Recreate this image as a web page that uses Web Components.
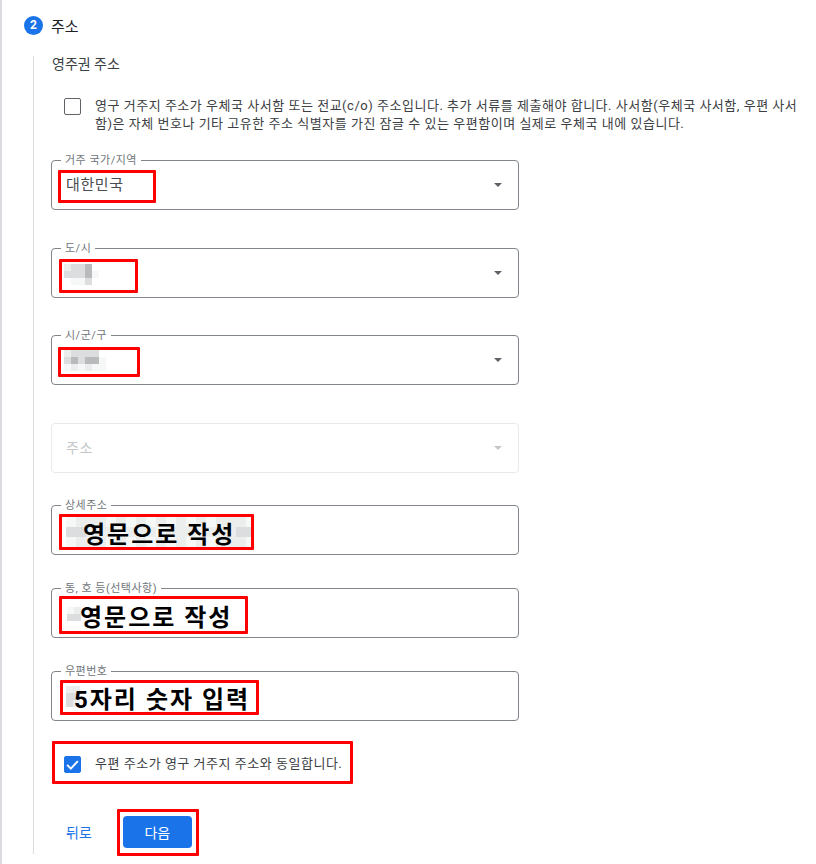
<!DOCTYPE html>
<html lang="ko">
<head>
<meta charset="utf-8">
<title>주소</title>
<style>
    html, body { margin: 0; background: #fff; overflow: hidden; }
    body { font: 14px Roboto, "Noto Sans CJK KR", sans-serif; color: #3c4043; }
</style>
</head>
<body>
<step-section number="2" heading="주소">
    <div style="font-size:14px;line-height:16px;color:#3c4043;margin-left:1px">영주권 주소</div>

    <check-row style="margin-top:26px;height:36px">
        영구 거주지 주소가 우체국 사서함 또는 전교(c/o) 주소입니다. 추가 서류를 제출해야 합니다. 사서함(우체국 사서함, 우편 사서<br>
        함)은 자체 번호나 기타 고유한 주소 식별자를 가진 잠글 수 있는 우편함이며 실제로 우체국 내에 있습니다.
    </check-row>

    <form-field label="거주 국가/지역" value="대한민국" select style="margin-top:26px">
        <red-box slot="mark" box="6,9,98,33"></red-box>
    </form-field>

    <form-field label="도/시" select style="margin-top:38px">
        <red-box slot="mark" box="7,10,79,34">
            <pixel-mosaic at="2,2" cells="1223,22234,04420"></pixel-mosaic>
        </red-box>
    </form-field>

    <form-field label="시/군/구" select style="margin-top:37px">
        <red-box slot="mark" box="6,11,82,30">
            <pixel-mosaic at="3,0" cells="122220,232334,414144"></pixel-mosaic>
        </red-box>
    </form-field>

    <form-field label="주소" placeholder select disabled style="margin-top:38px"></form-field>

    <form-field label="상세주소" style="margin-top:32px">
        <red-box slot="mark" box="7,8,195,36">
            <pixel-mosaic at="4,0" size="10" cells="4111414141414141114,2211141114111411122,4111414141414141114"></pixel-mosaic>
            <big-note left="21">영문으로 작성</big-note>
        </red-box>
    </form-field>

    <form-field label="동, 호 등(선택사항)" style="margin-top:33px">
        <red-box slot="mark" box="7,7,189,38">
            <pixel-mosaic at="5,8" cells="41,22"></pixel-mosaic>
            <big-note left="18">영문으로 작성</big-note>
        </red-box>
    </form-field>

    <form-field label="우편번호" style="margin-top:33px">
        <red-box slot="mark" box="8,8,199,35">
            <pixel-mosaic at="3,3" cells="11,22,21"></pixel-mosaic>
            <big-note left="11">5자리 숫자 입력</big-note>
        </red-box>
    </form-field>

    <check-row checked style="margin-top:35px;height:17px">
        우편 주소가 영구 거주지 주소와 동일합니다.
        <red-box slot="mark" box="1,-15,301,43"></red-box>
    </check-row>

    <form-actions back="뒤로" next="다음" style="margin-top:43px">
        <red-box slot="mark" box="-6,-7,82,47"></red-box>
    </form-actions>
</step-section>

<template id="step-section-tpl">
    <style>
        :host { display: block; height: 864px; box-sizing: border-box; border-left: 2px solid #dadce0; padding: 16px 0 0 22px; }
        .head { display: flex; align-items: center; gap: 8px; height: 18px; font-size: 15px; color: #202124; }
        .badge { width: 19px; height: 19px; border-radius: 50%; background: #1a73e8; color: #fff; font: 700 12px/19px Roboto, sans-serif; text-align: center; }
        .body { margin: 22px 0 0 9px; border-left: 1px solid #dadce0; padding-left: 17px; height: 798px; }
    </style>
    <div class="head"><span class="badge"></span><span class="title"></span></div>
    <div class="body"><slot></slot></div>
</template>

<template id="check-row-tpl">
    <style>
        :host { display: block; position: relative; padding-left: 13px; }
        .row { display: flex; gap: 14px; }
        .box { flex: none; width: 17px; height: 17px; box-sizing: border-box; border: 1px solid #5f6368; border-radius: 2px; display: flex; }
        :host([checked]) .box { background: #1a73e8; border-color: #1a73e8; }
        svg { display: none; width: 15px; height: 15px; }
        :host([checked]) svg { display: block; }
        .text { font-size: 13px; line-height: 18px; color: #3c4043; white-space: nowrap; margin-top: -1px; letter-spacing: .52px; }
    </style>
    <div class="row">
        <span class="box">
            <svg viewBox="0 0 14 14"><path d="M2 7.4 5.4 10.8 12 3.8" fill="none" stroke="#fff" stroke-width="1.8"/></svg>
        </span>
        <span class="text"><slot></slot></span>
    </div>
    <slot name="mark"></slot>
</template>

<template id="form-field-tpl">
    <style>
        :host { display: block; position: relative; width: 468px; height: 50px; box-sizing: border-box; border: 1px solid #80868b; border-radius: 4px; }
        :host([disabled]) { border-color: #e8eaed; }
        .label { position: absolute; left: 9px; top: -7px; padding: 0 4px; background: #fff; font-size: 11px; line-height: 13px; color: #70757a; white-space: nowrap; letter-spacing: .5px; }
        .value { position: absolute; left: 14px; top: 0; line-height: 48px; font-size: 15px; color: #4a4e52; letter-spacing: .6px; }
        :host([disabled]) .value { font-size: 14px; color: #c4c7c9; }
        .caret { display: none; position: absolute; right: 16px; top: 22px; width: 0; height: 0; border: 4.5px solid transparent; border-top-color: #5f6368; border-bottom: 0; }
        :host([select]) .caret { display: block; }
        :host([disabled]) .caret { border-top-color: #c4c7c9; }
    </style>
    <span class="label"></span>
    <span class="value"></span>
    <span class="caret"></span>
    <slot name="mark"></slot>
</template>

<template id="form-actions-tpl">
    <style>
        :host { display: flex; align-items: center; position: relative; width: max-content; margin-left: 15px; gap: 31px; }
        .back { font-size: 14px; color: #1a73e8; }
        .wrap { position: relative; display: block; }
        .next { display: block; width: 69px; height: 32px; border: 0; border-radius: 4px; background: #1a73e8; color: #fff; font: 14px Roboto, "Noto Sans CJK KR", sans-serif; padding: 0; }
    </style>
    <span class="back"></span>
    <span class="wrap"><button class="next" type="button"></button><slot name="mark"></slot></span>
</template>

<template id="red-box-tpl">
    <style>
        :host { display: block; position: absolute; box-sizing: border-box; border: 3px solid #f00; border-radius: 1px; overflow: hidden; }
    </style>
    <slot></slot>
</template>

<template id="pixel-mosaic-tpl">
    <style>
        :host { position: absolute; display: grid; }
        i { display: block; }
    </style>
</template>

<template id="big-note-tpl">
    <style>
        :host { position: absolute; top: 0; bottom: 0; display: flex; align-items: center; font: 700 24px Roboto, "Noto Sans CJK KR", sans-serif; letter-spacing: 2px; color: #000; white-space: nowrap; }
    </style>
    <slot></slot>
</template>

<script>
    function shadowFrom(el, id) {
        const root = el.attachShadow({mode: 'open'});
        root.appendChild(document.getElementById(id).content.cloneNode(true));
        return root;
    }

    class StepSection extends HTMLElement {
        constructor() {
            super();
            const root = shadowFrom(this, 'step-section-tpl');
            root.querySelector('.badge').textContent = this.getAttribute('number');
            root.querySelector('.title').textContent = this.getAttribute('heading');
        }
    }

    class CheckRow extends HTMLElement {
        constructor() {
            super();
            shadowFrom(this, 'check-row-tpl');
        }
    }

    class FormField extends HTMLElement {
        constructor() {
            super();
            const root = shadowFrom(this, 'form-field-tpl');
            const label = this.getAttribute('label');
            root.querySelector('.label').textContent = label;
            // the disabled field shows its label as a placeholder inside the box
            if (this.hasAttribute('placeholder')) {
                root.querySelector('.label').remove();
                root.querySelector('.value').textContent = label;
            } else {
                root.querySelector('.value').textContent = this.getAttribute('value') || '';
            }
        }
    }

    class FormActions extends HTMLElement {
        constructor() {
            super();
            const root = shadowFrom(this, 'form-actions-tpl');
            root.querySelector('.back').textContent = this.getAttribute('back');
            root.querySelector('.next').textContent = this.getAttribute('next');
        }
    }

    class RedBox extends HTMLElement {
        constructor() {
            super();
            shadowFrom(this, 'red-box-tpl');
            const [x, y, w, h] = this.getAttribute('box').split(',');
            this.style.cssText += `left:${x}px;top:${y}px;width:${w}px;height:${h}px`;
        }
    }

    // blurred-out text: each digit is one grey square
    const MOSAIC_SHADES = ['transparent', '#eceded', '#dcddde', '#b9babb', '#f6f7f7'];

    class PixelMosaic extends HTMLElement {
        constructor() {
            super();
            const root = shadowFrom(this, 'pixel-mosaic-tpl');
            const [x, y] = this.getAttribute('at').split(',');
            const size = this.getAttribute('size') || 7;
            this.style.cssText += `left:${x}px;top:${y}px;grid-auto-rows:${size}px;grid-auto-columns:${size}px`;
            this.getAttribute('cells').split(',').forEach((row, r) => {
                [...row].forEach((shade, c) => {
                    const cell = document.createElement('i');
                    cell.style.cssText = `grid-row:${r + 1};grid-column:${c + 1};background:${MOSAIC_SHADES[shade]}`;
                    root.appendChild(cell);
                });
            });
        }
    }

    class BigNote extends HTMLElement {
        constructor() {
            super();
            shadowFrom(this, 'big-note-tpl');
            this.style.left = this.getAttribute('left') + 'px';
        }
    }

    customElements.define('step-section', StepSection);
    customElements.define('check-row', CheckRow);
    customElements.define('form-field', FormField);
    customElements.define('form-actions', FormActions);
    customElements.define('red-box', RedBox);
    customElements.define('pixel-mosaic', PixelMosaic);
    customElements.define('big-note', BigNote);
</script>
</body>
</html>
